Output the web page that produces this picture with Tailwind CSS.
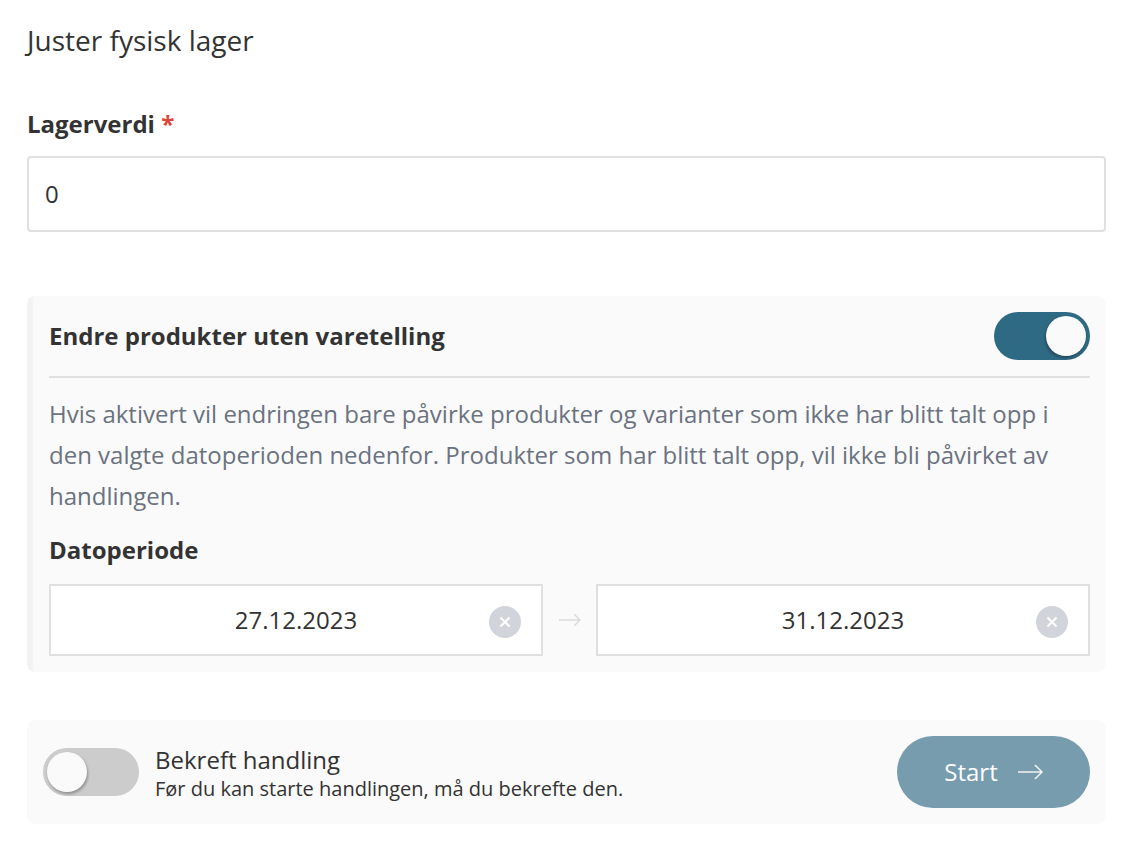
<!DOCTYPE html>
<html lang="en">

<head>
  <meta charset="UTF-8" />
  <title>Juster fysisk lager</title>
  <script src="https://cdn.jsdelivr.net/npm/@tailwindcss/browser@4"></script>
</head>

<body class="bg-white text-[#333333] font-['Open_Sans',sans-serif]">
  <div class="pl-[27px] pr-[28px]">

    <!-- Title -->
    <h1 class="pt-[21px] text-[28px] leading-[38px] text-[#333333]">Juster fysisk lager</h1>

    <!-- Stock value -->
    <label class="block mt-[45px] text-[24px] leading-[40px] font-bold">Lagerverdi <span class="text-[#e0453a]">*</span></label>
    <div class="mt-[12px] h-[76px] flex items-center px-[16px] bg-white border-2 border-[#e0e0e0] rounded-[4px] text-[24px]">0</div>

    <!-- Uncounted products panel -->
    <section class="mt-[64px] h-[376px] bg-[#fafafa] border-l-[6px] border-[#f3f3f3] rounded-[8px] pl-[16px] pr-[16px]">
      <div class="h-[82px] flex items-center justify-between border-b-2 border-[#e0e0e0]">
        <h2 class="text-[24px] font-bold">Endre produkter uten varetelling</h2>
        <div class="relative w-[96px] h-[48px] rounded-full bg-[#2f6a84]">
          <span class="absolute right-[4px] top-[4px] w-[40px] h-[40px] rounded-full bg-[#fafafa] shadow-[-1px_2px_3px_rgba(0,0,0,0.3)]"></span>
        </div>
      </div>
      <p class="mt-[15px] text-[24px] leading-[41px] text-[#6b7280]">Hvis aktivert vil endringen bare påvirke produkter og varianter som ikke har blitt talt opp i den valgte datoperioden nedenfor. Produkter som har blitt talt opp, vil ikke bli påvirket av handlingen.</p>
      <h3 class="mt-[14px] text-[24px] leading-[40px] font-bold">Datoperiode</h3>
      <div class="mt-[14px] flex items-center justify-between">
        <div class="relative w-[494px] h-[72px] flex items-center justify-center bg-white border-2 border-[#e0e0e0] text-[24px]">
          27.12.2023
          <span class="absolute right-[20px] top-[20px] w-[32px] h-[32px] rounded-full bg-[#d1d5db] flex items-center justify-center">
            <svg width="12" height="12" viewBox="0 0 12 12" fill="none" stroke="#ffffff" stroke-width="2"><path d="M1.5 1.5l9 9M10.5 1.5l-9 9" /></svg>
          </span>
        </div>
        <svg width="22" height="14" viewBox="0 0 22 14" fill="none" stroke="#dcdcdc" stroke-width="1.5"><path d="M0 7h21M15 1l6 6-6 6" /></svg>
        <div class="relative w-[494px] h-[72px] flex items-center justify-center bg-white border-2 border-[#e0e0e0] text-[24px]">
          31.12.2023
          <span class="absolute right-[20px] top-[20px] w-[32px] h-[32px] rounded-full bg-[#d1d5db] flex items-center justify-center">
            <svg width="12" height="12" viewBox="0 0 12 12" fill="none" stroke="#ffffff" stroke-width="2"><path d="M1.5 1.5l9 9M10.5 1.5l-9 9" /></svg>
          </span>
        </div>
      </div>
    </section>

    <!-- Confirm bar -->
    <section class="mt-[48px] h-[104px] bg-[#fafafa] rounded-[8px] pl-[16px] pr-[16px] flex items-center justify-between">
      <div class="flex items-center gap-[16px]">
        <div class="relative w-[96px] h-[48px] rounded-full bg-[#cccccc]">
          <span class="absolute left-[4px] top-[4px] w-[40px] h-[40px] rounded-full bg-[#fafafa] shadow-[1px_2px_3px_rgba(0,0,0,0.3)]"></span>
        </div>
        <div class="pt-[4px]">
          <div class="text-[24px] leading-[30px]">Bekreft handling</div>
          <div class="text-[20px] leading-[28px]">Før du kan starte handlingen, må du bekrefte den.</div>
        </div>
      </div>
      <button class="w-[193px] h-[72px] rounded-full bg-[#769cae] text-white text-[24px] flex items-center justify-center gap-[20px]">
        Start
        <svg width="25" height="16" viewBox="0 0 25 16" fill="none" stroke="#f3f3f3" stroke-width="1.5"><path d="M0 8h24M17 1l7 7-7 7" /></svg>
      </button>
    </section>
  </div>
</body>

</html>
